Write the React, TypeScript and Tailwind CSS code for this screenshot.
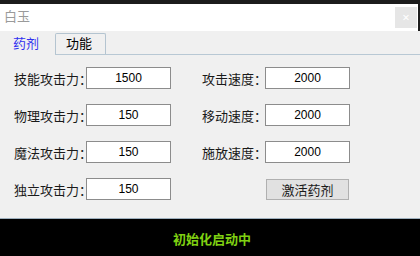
const CJK = { fontFamily: '"Noto Sans CJK SC", "Noto Sans", sans-serif' }
const NUM = { fontFamily: '"Liberation Sans", Arial, sans-serif' }

type Field = { label: string; value: string }

const LEFT: Field[] = [
  { label: '技能攻击力：', value: '1500' },
  { label: '物理攻击力：', value: '150' },
  { label: '魔法攻击力：', value: '150' },
  { label: '独立攻击力：', value: '150' },
]

const RIGHT: Field[] = [
  { label: '攻击速度：', value: '2000' },
  { label: '移动速度：', value: '2000' },
  { label: '施放速度：', value: '2000' },
]

function Input({ value }: { value: string }) {
  return (
    <div
      className="relative z-10 flex h-[22px] w-[85px] shrink-0 items-center justify-center border border-[#8c8c8c] bg-white text-[12px] text-black"
      style={NUM}
    >
      {value}
    </div>
  )
}

function Row({ field, labelWidth }: { field: Field; labelWidth: string }) {
  return (
    <div className="flex items-center">
      <span className={`${labelWidth} shrink-0 whitespace-nowrap text-[13px] leading-none text-[#1a1a1a]`} style={CJK}>
        {field.label}
      </span>
      <Input value={field.value} />
    </div>
  )
}

export default function App() {
  return (
    <div className="flex h-[256px] w-[420px] flex-col overflow-hidden bg-[#1c1c1c]">
      {/* window chrome */}
      <div className="h-[4px] shrink-0 bg-[#1c1c1c]" />
      <div className="mr-[2px] flex h-[27px] shrink-0 items-start justify-between bg-white">
        <span className="ml-[4px] mt-[5px] text-[13px] leading-none text-[#9a9a9a]" style={CJK}>
          白玉
        </span>
        <div className="mr-[1px] mt-[3px] flex h-[21px] w-[22px] items-center justify-center bg-[#e6e6e6] text-[13px] leading-none text-white">
          ×
        </div>
      </div>

      {/* body */}
      <div className="flex h-[187px] shrink-0 flex-col bg-[#f0f0f0]">
        <div className="flex h-[23px] shrink-0 items-end">
          <div className="relative z-10 -mb-px flex h-[23px] w-[55px] items-start bg-[#f0f0f0] pl-[13px] pt-[4px]">
            <span className="text-[13px] leading-none text-[#3030f0]" style={CJK}>
              药剂
            </span>
          </div>
          <div className="flex h-[21px] w-[51px] items-start rounded-t-[2px] border border-b-0 border-[#b4c4d0] pl-[10px] pt-[2px]">
            <span className="text-[13px] leading-none text-black" style={CJK}>
              功能
            </span>
          </div>
          <div className="h-px flex-1" />
        </div>
        <div className="h-px shrink-0 bg-[#b8c8d4]" />

        <div className="flex pl-[14px] pt-[12px]">
          <div className="flex flex-col gap-[15px]">
            {LEFT.map((f) => (
              <Row key={f.label} field={f} labelWidth="w-[72px]" />
            ))}
          </div>
          <div className="ml-[31px] flex flex-col gap-[15px]">
            {RIGHT.map((f) => (
              <Row key={f.label} field={f} labelWidth="w-[63px]" />
            ))}
            <div className="flex h-[22px] items-center pl-[64px]">
              <button
                className="flex h-[21px] w-[83px] items-center justify-center border border-[#b0b0b0] bg-[#e1e1e1] text-[13px] leading-none text-[#1a1a1a]"
                style={CJK}
              >
                激活药剂
              </button>
            </div>
          </div>
        </div>
      </div>

      {/* status bar */}
      <div className="h-px shrink-0 bg-[#9eb0be]" />
      <div className="flex flex-1 items-center justify-center bg-black pl-[4px] pt-[2px]">
        <span className="text-[13px] font-bold leading-none text-[#7fd012]" style={CJK}>
          初始化启动中
        </span>
      </div>
    </div>
  )
}
